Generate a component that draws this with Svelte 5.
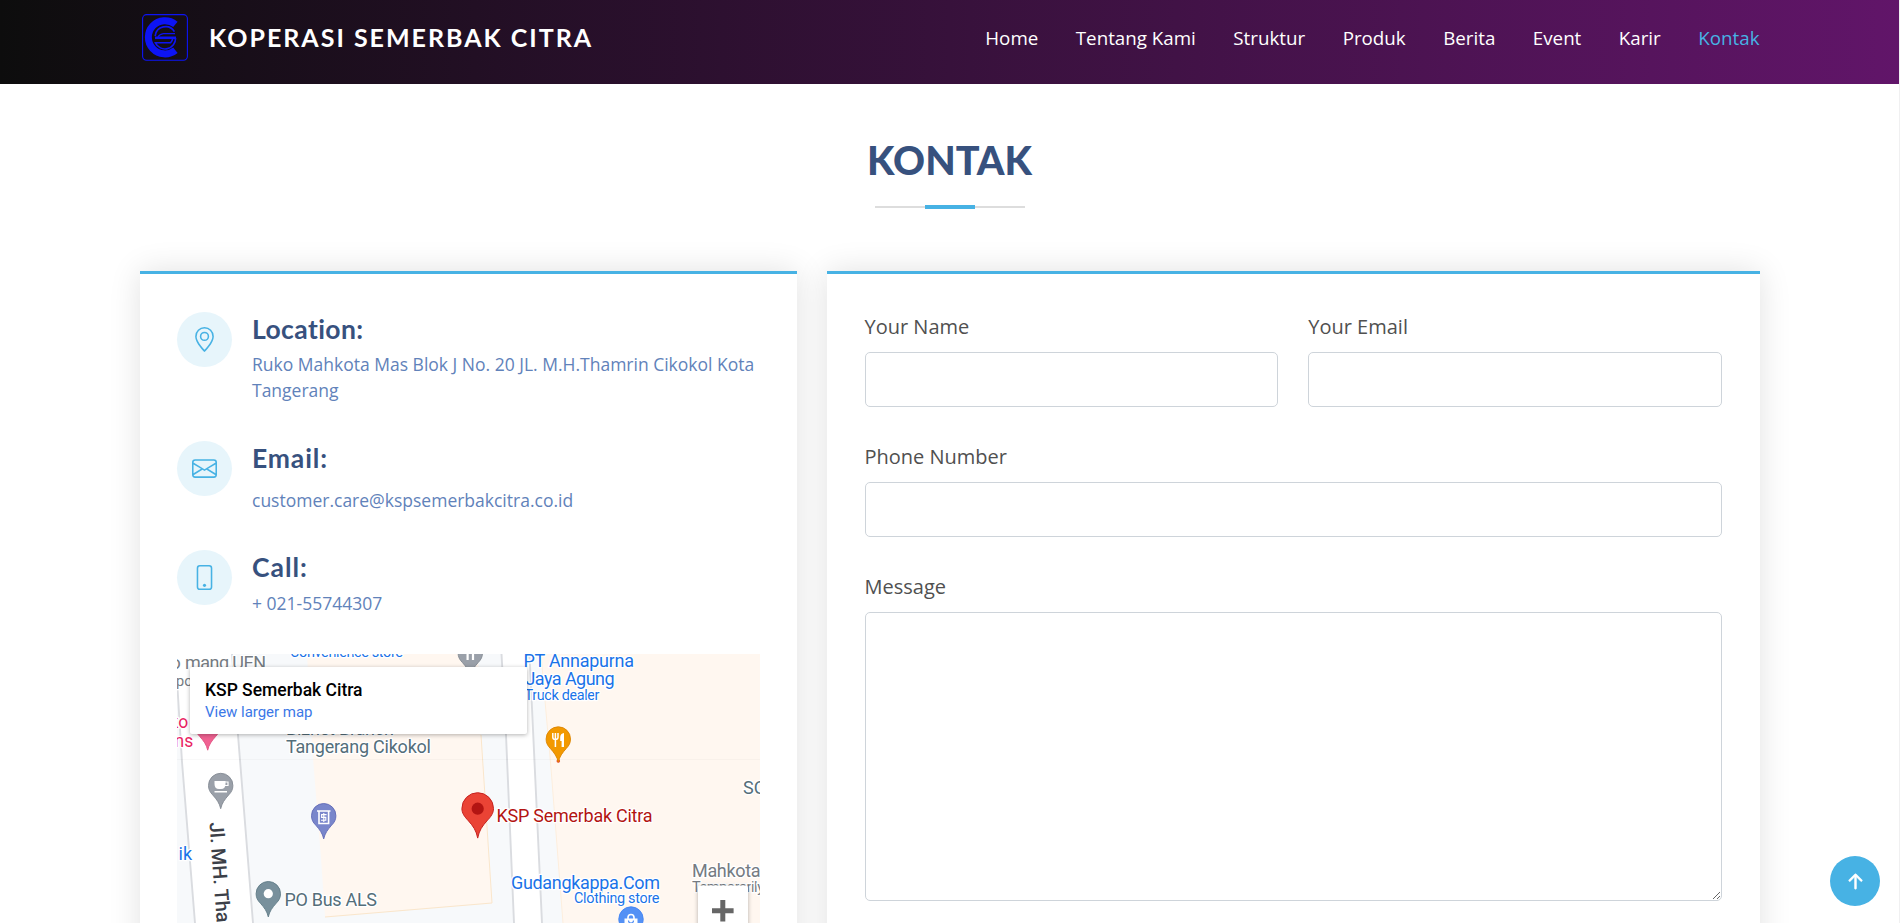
<script>
  const nav = ['Home', 'Tentang Kami', 'Struktur', 'Produk', 'Berita', 'Event', 'Karir', 'Kontak'];

  // Map labels: text, x, baseline, size, width, kind
  const labels = [
    ['o', 170.5, 669, 18, null, 'grey'],
    ['mang UEN', 185, 669, 18, 81, 'grey'],
    ['po', 176, 685.5, 14.5, null, 'grey'],
    ['Convenience store', 290, 657, 14.5, 113, 'blue'],
    ['ko', 169.5, 728, 17.5, null, 'pink'],
    ['ns', 174.5, 746.5, 17.5, null, 'pink'],
    ['ik', 178.5, 860, 18, null, 'blue'],
    ['Biznet Branch', 286, 735, 18, 108, 'slate'],
    ['Tangerang Cikokol', 286, 752.7, 18, 145, 'slate'],
    ['PO Bus ALS', 284.5, 906, 18, 92.5, 'slate'],
    ['PT Annapurna', 523.5, 667, 18, 110.5, 'blue'],
    ['Jaya Agung', 525.5, 685, 18, 89, 'blue'],
    ['Truck dealer', 524.5, 699.5, 14.5, 75, 'blue'],
    ['KSP Semerbak Citra', 496.5, 821.7, 18, 156, 'red'],
    ['Gudangkappa.Com', 511, 889, 18, 149, 'blue'],
    ['Clothing store', 574, 903.3, 14.5, 85.5, 'blue'],
    ['SO', 743, 793.7, 18, null, 'slate'],
    ['Mahkota', 692, 877.3, 18, 68.5, 'grey'],
    ['Temporarily', 692, 892, 14.5, 72, 'grey']
  ];
</script>

{#snippet pin(x, y, fill, edge)}
  <path
    transform="translate({x} {y})"
    d="M0 23.2C-1.2 17.5-4 14-8 9.4C-10.8 6.6-12.2 3.8-12.2 0A12.2 12.2 0 0 1 12.2 0C12.2 3.8 10.8 6.6 8 9.4C4 14 1.2 17.5 0 23.2Z"
    {fill} stroke={edge} stroke-width=".9" />
{/snippet}

<header>
  <div class="container bar">
    <a class="brand" href="#home">
      <svg width="46" height="47" viewBox="0 0 46 47" fill="none" stroke="#0d14f5">
        <rect x=".6" y=".6" width="44.8" height="45.6" rx="4" stroke-width="1.1" />
        <path d="M33.4 10.4A16.6 16.6 0 1 0 33.4 36.2" stroke-width="7" />
        <path d="M13.2 22A10.4 10.4 0 0 1 32.4 17.6" stroke-width="1.7" />
        <path d="M33 19.6H21.5Q17.5 20 16 23" stroke-width="1.3" />
        <path d="M13 23.8H34" stroke-width="2.6" />
        <path d="M33.6 24A10.6 10.6 0 0 1 13.4 28.8H28.6Q30.4 27 30.8 24" stroke-width="1.6" />
      </svg>
      <span>KOPERASI SEMERBAK CITRA</span>
    </a>
    <nav>
      {#each nav as item}
        <a href="#{item}" class:active={item === 'Kontak'}>{item}</a>
      {/each}
    </nav>
  </div>
</header>

<main class="container">
  <div class="title">
    <h2>KONTAK</h2>
    <div class="rule"><i></i></div>
  </div>

  <div class="columns">
    <section class="card info">
      <div class="item location">
        <div class="icon">
          <svg width="25" height="25" viewBox="0 0 16 16" fill="currentColor">
            <path d="M12.166 8.94c-.524 1.062-1.234 2.12-1.96 3.07A31.493 31.493 0 0 1 8 14.58a31.481 31.481 0 0 1-2.206-2.57c-.726-.95-1.436-2.008-1.96-3.07C3.304 7.867 3 6.862 3 6a5 5 0 0 1 10 0c0 .862-.305 1.867-.834 2.94zM8 16s6-5.686 6-10A6 6 0 0 0 2 6c0 4.314 6 10 6 10z" />
            <path d="M8 8a2 2 0 1 1 0-4 2 2 0 0 1 0 4zm0 1a3 3 0 1 0 0-6 3 3 0 0 0 0 6z" />
          </svg>
        </div>
        <div class="copy">
          <h4>Location:</h4>
          <p>Ruko Mahkota Mas Blok J No. 20 JL. M.H.Thamrin Cikokol Kota<br />Tangerang</p>
        </div>
      </div>
      <div class="item email">
        <div class="icon">
          <svg width="25" height="25" viewBox="0 0 16 16" fill="currentColor">
            <path d="M0 4a2 2 0 0 1 2-2h12a2 2 0 0 1 2 2v8a2 2 0 0 1-2 2H2a2 2 0 0 1-2-2V4zm2-1a1 1 0 0 0-1 1v.217l7 4.2 7-4.2V4a1 1 0 0 0-1-1H2zm13 2.383-4.758 2.855L15 11.114v-5.73zm-.034 6.878L9.271 8.82 8 9.583 6.728 8.82l-5.694 3.44A1 1 0 0 0 2 13h12a1 1 0 0 0 .966-.739zM1 11.114l4.758-2.876L1 5.383v5.73z" />
          </svg>
        </div>
        <div class="copy">
          <h4>Email:</h4>
          <p>customer.care@kspsemerbakcitra.co.id</p>
        </div>
      </div>
      <div class="item call">
        <div class="icon">
          <svg width="25" height="25" viewBox="0 0 16 16" fill="currentColor">
            <path d="M11 1a1 1 0 0 1 1 1v12a1 1 0 0 1-1 1H5a1 1 0 0 1-1-1V2a1 1 0 0 1 1-1h6zM5 0a2 2 0 0 0-2 2v12a2 2 0 0 0 2 2h6a2 2 0 0 0 2-2V2a2 2 0 0 0-2-2H5z" />
            <path d="M8 14a1 1 0 1 0 0-2 1 1 0 0 0 0 2z" />
          </svg>
        </div>
        <div class="copy">
          <h4>Call:</h4>
          <p>+ 021-55744307</p>
        </div>
      </div>

      <svg class="map" width="583" height="363" viewBox="177 654 583 363">
        <rect x="177" y="654" width="583" height="363" fill="#f7f9fb" />
        <!-- building blocks -->
        <path d="M307 654H478L481 735L492 903L325 917L321 858L313 758Z" fill="#fff7f0" />
        <path d="M481 735L492 903L325 917" fill="none" stroke="#fae6cb" stroke-width="1" />
        <path d="M541 654L546 712L551 768L563 923L570 1017H760V654Z" fill="#fff7f0" />
        <path d="M541 654L546 712L551 768L563 923" fill="none" stroke="#fdeedd" />
        <!-- roads -->
        <path d="M177 654H232L238 735L253 923L260 1017H202L195 923L182 762L177 695Z" fill="#fff" />
        <path d="M177 680L182 762L195 923L202 1017M232 654L238 735L253 923L260 1017" fill="none" stroke="#dadce0" stroke-width="1.9" />
        <path d="M501.5 654L506 735L514 923L518 1017H548L542 923L530 665L529 654Z" fill="#fff" />
        <path d="M501.5 654L506 735L514 923L518 1017M529 654L530 665L542 923L548 1017" fill="none" stroke="#dadce0" stroke-width="1.9" />
        <path d="M177 759.5H760" stroke="#000" stroke-opacity=".025" />

        {@render pin(470.3, 653, '#9aa0a9', '#858b94')}
        <path d="M467.6 650V660M473 650V660" stroke="#fff" stroke-width="2.2" fill="none" />
        {@render pin(207.7, 727, '#f06292', '#e35385')}
        {@render pin(220.7, 785.5, '#9aa0a9', '#858b94')}
        <path d="M214.5 781H225.5V784Q225.5 789 221 789H219Q214.5 789 214.5 784ZM214.5 791H227V792.6H214.5Z" fill="#fff" />
        <path d="M225 782H228V785.5H225" fill="none" stroke="#fff" stroke-width="1.2" />
        {@render pin(323.7, 815.7, '#7986cb', '#6069b5')}
        <path d="M317 811H330.5M319 811V823.5H328.6V811" fill="none" stroke="#fff" stroke-width="1.6" />
        <path d="M326.6 814.6H321.6V817.4H325.8V820.2H321M323.8 813V822" fill="none" stroke="#fff" stroke-width="1.1" />
        {@render pin(268.3, 893.7, '#78909c', '#5f7a86')}
        <circle cx="268.3" cy="893.7" r="4.6" fill="#fff" />
        <circle cx="558.3" cy="761" r="1.8" fill="#ea4335" />
        {@render pin(558.3, 739, '#f29900', '#dd8500')}
        <path d="M552.8 733V737.2Q552.8 739.5 555.4 739.5T558 737.2V733M555.4 733V747" fill="none" stroke="#fff" stroke-width="1.5" />
        <path d="M564 733V747H561.6V741H560.2V737Q560.4 733.6 564 733Z" fill="#fff" />
        {@render pin(631, 919, '#5491f5', '#4285f4')}
        <path d="M624.5 918.5H637.5V928H624.5Z" fill="#fff" />
        <path d="M628 919V917.5A3 3 0 0 1 634 917.5V919" fill="none" stroke="#fff" stroke-width="1.6" />
        <path d="M628.5 920.5A2.5 2.5 0 0 0 633.5 920.5" fill="none" stroke="#5491f5" stroke-width="1.2" />
        <path transform="translate(477.7 808.5)" d="M0 29.6C-1.4 22-4.6 17.6-9.2 12.4C-13.4 8-15.8 4.6-15.8 0A15.8 15.8 0 0 1 15.8 0C15.8 4.6 13.4 8 9.2 12.4C4.6 17.6 1.4 22 0 29.6Z" fill="#ea4335" stroke="#c5221f" />
        <circle cx="477.7" cy="808.7" r="6.1" fill="#b31412" />

        {#each labels as [text, x, y, size, width, kind]}
          <text {x} {y} font-size={size} textLength={width} class={kind}>{text}</text>
        {/each}
        <text class="road" transform="translate(209.4 822.5) rotate(85.8)" font-size="19.6">Jl. MH. Thamrin</text>

        <g class="raised">
          <rect x="190" y="667" width="337" height="67" rx="2" fill="#fff" />
        </g>
        <text class="place" x="205" y="695.7" font-size="17.5" textLength="157.5">KSP Semerbak Citra</text>
        <text class="larger" x="205" y="717.3" font-size="15" textLength="107.5">View larger map</text>
        <g class="raised">
          <rect x="698" y="885.5" width="50" height="101" rx="2" fill="#fff" />
        </g>
        <path d="M712 910.8H733.6M722.8 900V921.6" stroke="#666" stroke-width="5" />
      </svg>
    </section>

    <form class="card">
      <div class="pair">
        <label>Your Name<input type="text" /></label>
        <label>Your Email<input type="text" /></label>
      </div>
      <label>Phone Number<input type="text" /></label>
      <label>Message<textarea></textarea></label>
    </form>
  </div>
</main>

<a class="to-top" href="#top" aria-label="Top">
  <svg width="31" height="31" viewBox="0 0 16 16" fill="#fff" stroke="#fff" stroke-width=".25">
    <path d="M8 12a.5.5 0 0 0 .5-.5V5.707l2.146 2.147a.5.5 0 0 0 .708-.708l-3-3a.5.5 0 0 0-.708 0l-3 3a.5.5 0 1 0 .708.708L7.5 5.707V11.5a.5.5 0 0 0 .5.5z" />
  </svg>
</a>

<style>
  :global(html), :global(body) { height: 100%; }
  :global(body) { overflow: hidden; background: #fff; }
  :global(#app) {
    box-sizing: border-box;
    height: 923px;
    overflow: hidden;
    border-right: 1px solid #f0f0f1;
    font-family: 'Open Sans', sans-serif;
    color: #505050;
  }
  a { text-decoration: none; }
  .container { width: 1620px; margin: 0 auto; }

  header {
    height: 84px;
    background: linear-gradient(90deg, #0d0d0d, #611569);
  }
  .bar { display: flex; justify-content: space-between; }
  .brand {
    display: flex;
    padding: 14px 0 0 2.5px;
    color: #fff;
    font: 700 25px/47px Lato, sans-serif;
    letter-spacing: 2px;
    white-space: nowrap;
  }
  .brand span { margin-left: 21px; }
  nav {
    display: flex;
    gap: 37.5px;
    padding-top: 24px;
    font-size: 18.75px;
    font-weight: 500;
    line-height: 28px;
    white-space: nowrap;
  }
  nav a { color: #fff; }
  nav a.active { color: #47b2e4; }

  .title {
    display: flex;
    flex-direction: column;
    align-items: center;
    padding-top: 51px;
    height: 136px;
  }
  h2 {
    margin: 0;
    font: 900 39.5px/50px Lato, sans-serif;
    color: #37517e;
  }
  .rule {
    display: flex;
    align-items: center;
    justify-content: center;
    width: 150px;
    height: 4px;
    margin-top: 20px;
    background: linear-gradient(#ddd, #ddd) center / 100% 2px no-repeat;
  }
  .rule i { width: 50px; height: 4px; background: #47b2e4; }

  .columns {
    display: grid;
    grid-template-columns: 657.5px 932.5px;
    gap: 30px;
  }
  .card {
    box-sizing: border-box;
    height: 760px;
    padding: 38px 37.5px;
    border-top: 3px solid #47b2e4;
    background: #fff;
    box-shadow: 0 0 30px rgba(0, 0, 0, .12);
  }

  .item { display: flex; gap: 20px; color: #47b2e4; }
  .location { height: 129px; }
  .email { height: 109px; }
  .call { height: 104px; }
  .icon {
    display: grid;
    place-items: center;
    flex: none;
    width: 55px;
    height: 55px;
    border-radius: 50%;
    background: #e7f5fb;
  }
  .copy { white-space: nowrap; }
  h4 {
    margin: 0;
    padding-top: 1px;
    font: 700 26.5px/33px Lato, sans-serif;
    letter-spacing: .4px;
    color: #37517e;
  }
  .email h4 { letter-spacing: .85px; }
  .call h4 { letter-spacing: .95px; }
  p {
    margin: 5px 0 0;
    font-size: 17.5px;
    line-height: 26.25px;
    color: #6182ba;
  }
  .email p { margin-top: 12px; }
  .call p { margin-top: 6px; }

  .map {
    display: block;
    font-family: Roboto, sans-serif;
  }
  .map text { stroke: #fff; stroke-width: 2.6px; stroke-linejoin: round; paint-order: stroke; }
  .map .grey { fill: #757b82; }
  .map .blue { fill: #1a73e8; }
  .map .pink { fill: #e91e63; }
  .map .slate { fill: #546e7a; }
  .map .red { fill: #b31412; }
  .map .road { fill: #3c4048; font-weight: 500; }
  .map .place { fill: #000; stroke: none; font-weight: 500; }
  .map .larger { fill: #3b78e7; stroke: none; }
  .raised { filter: drop-shadow(0 1px 2px rgba(0, 0, 0, .3)); }

  form { display: flex; flex-direction: column; gap: 30px; }
  .pair { display: grid; grid-template-columns: 1fr 1fr; gap: 30px; }
  label {
    display: block;
    font-size: 20px;
    line-height: 30px;
  }
  input, textarea {
    display: block;
    box-sizing: border-box;
    width: 100%;
    height: 55px;
    margin: 10px 0 5px;
    border: 1px solid #ced4da;
    border-radius: 5px;
    background: #fff;
    outline: 0;
  }
  textarea { height: 289px; resize: vertical; }

  .to-top {
    position: fixed;
    right: 20px;
    bottom: 17px;
    display: grid;
    place-items: center;
    width: 50px;
    height: 50px;
    border-radius: 50%;
    background: #47b2e4;
  }
</style>
